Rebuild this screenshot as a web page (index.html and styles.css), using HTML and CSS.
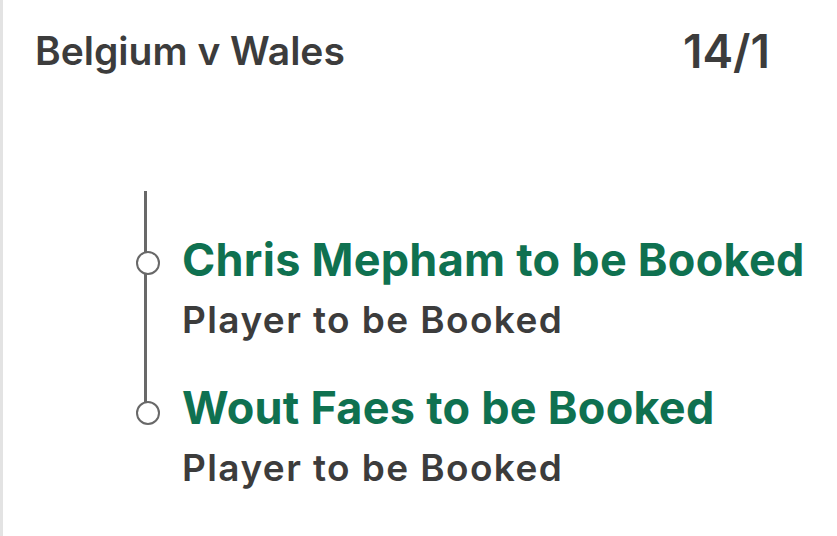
FILE: index.html
```html
<!DOCTYPE html>
<html lang="en">

<head>
    <meta charset="UTF-8">
    <meta name="viewport" content="width=device-width, initial-scale=1.0">
    <title>Belgium v Wales</title>
    <link rel="stylesheet" href="styles.css">
</head>

<body>
    <div class="card">
        <div class="bet-head">
            <span class="match">Belgium v Wales</span>
            <span class="odds">14/1</span>
        </div>

        <div class="legs">
            <div class="leg">
                <div class="leg-title">Chris Mepham to be Booked</div>
                <div class="leg-market">Player to be Booked</div>
            </div>
            <div class="leg">
                <div class="leg-title">Wout Faes to be Booked</div>
                <div class="leg-market">Player to be Booked</div>
            </div>
        </div>
    </div>
</body>

</html>
```

FILE: styles.css
```css
/* General Reset */
* {
    margin: 0;
    padding: 0;
    box-sizing: border-box;
}

body {
    font-family: Inter, "Noto Sans", sans-serif;
    background-color: #fff;
    color: #3c3c3c;
}

.card {
    min-height: 536px;
    border-left: 3px solid #e3e3e3;
    padding: 0 67px 0 32px;
}

.bet-head {
    display: flex;
    justify-content: space-between;
    align-items: center;
    padding-top: 25px;
}

.match {
    font-size: 39px;
    font-weight: 600;
    line-height: 52px;
}

.odds {
    font-size: 46px;
    font-weight: 600;
    line-height: 52px;
}

/* Timeline */
.legs {
    position: relative;
    margin-top: 114px;
    margin-left: 109px;
}

/* vertical line, runs down to the last dot */
.legs::before {
    content: "";
    position: absolute;
    left: 0;
    top: 0;
    width: 3px;
    height: 219px;
    background: #686868;
}

.leg {
    position: relative;
    padding-left: 38px;
    padding-top: 43px;
}

.leg + .leg {
    padding-top: 40px;
}

/* dot on the line */
.leg::after {
    content: "";
    position: absolute;
    left: -8.5px;
    top: 60px;
    width: 20px;
    height: 20px;
    border: 2.5px solid #686868;
    border-radius: 50%;
    background: #fff;
}

.leg + .leg::after {
    top: 59px;
}

.leg-title {
    font-size: 45px;
    font-weight: 700;
    line-height: 52px;
    letter-spacing: 0.25px;
    color: #0f7150;
    white-space: nowrap;
}

.leg-market {
    margin-top: 12px;
    font-size: 37px;
    font-weight: 600;
    line-height: 44px;
    letter-spacing: 1.4px;
    color: #3c3c3c;
}
```
